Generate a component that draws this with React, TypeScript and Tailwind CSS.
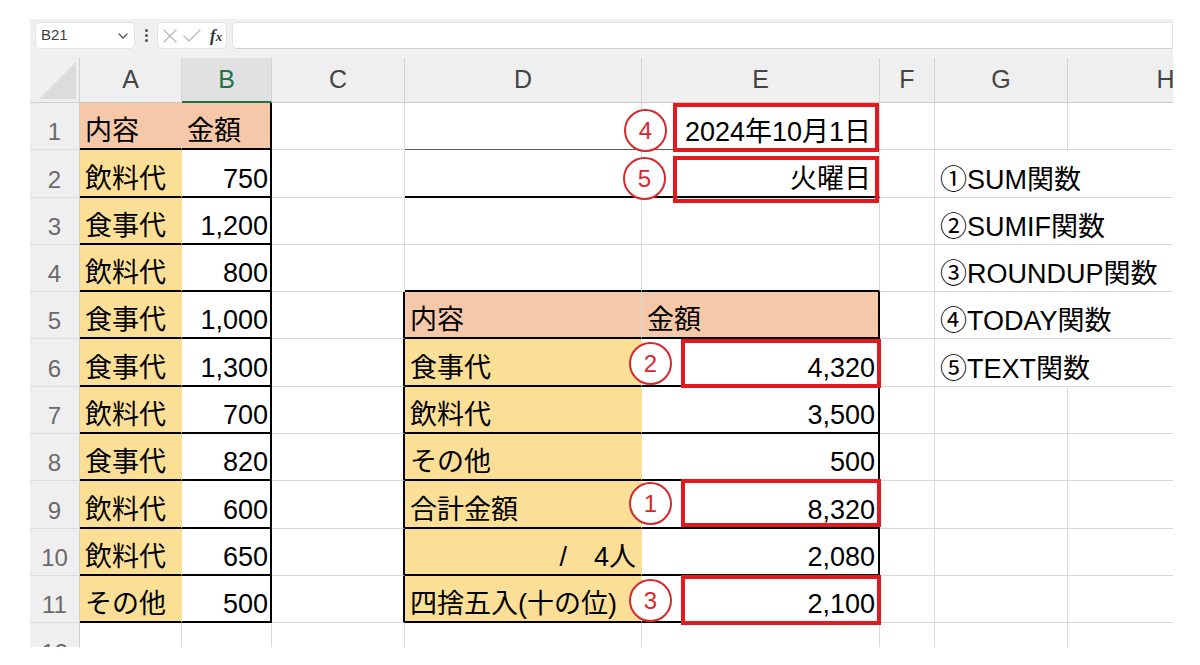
import { ChevronDown, X, Check } from "lucide-react";

type Cell = {
  t?: string;
  right?: boolean;
  bg?: string;
  b?: string;
  r?: string;
  pr?: string;
};

// border presets
const GB = "border-b border-b-[#d9d9d9]";
const BB = "border-b-2 border-b-black";
const BD = "border-b border-b-[#5a5a5a]";
const GR = "border-r border-r-[#d9d9d9]";
const RB = "border-r-2 border-r-black";
const RN = "border-r border-r-transparent";

const S = "bg-[#f5c8aa]";
const Y = "bg-[#fbdf97]";

const left = (t: string, bg: string): Cell => ({ t, bg, b: BB, r: RN });
const num = (t: string): Cell => ({ t, right: true, b: BB, r: RB, pr: "pr-[2px]" });
const amt = (t: string): Cell => ({ t, right: true, b: BB, r: RB, pr: "pr-[3px]" });
const tbl = (t: string): Cell => ({ t, bg: Y, b: BB, r: RN });
const fn = (t: string): Cell => ({ t, r: RN });

const rows: Cell[][] = [
  [left("内容", S), { t: "金額", bg: S, b: BB, r: RB }, {}, { b: BD }, { t: "2024年10月1日", right: true, b: BD, pr: "pr-[8px]" }, {}, {}, {}],
  [left("飲料代", Y), num("750"), {}, { b: BB }, { t: "火曜日", right: true, b: BB, pr: "pr-[8px]" }, {}, fn("①SUM関数"), {}],
  [left("食事代", Y), num("1,200"), {}, {}, {}, {}, fn("②SUMIF関数"), {}],
  [left("飲料代", Y), num("800"), {}, { b: BB }, { b: BB }, {}, fn("③ROUNDUP関数"), {}],
  [left("食事代", Y), num("1,000"), { r: RB }, { t: "内容", bg: S, b: BB }, { t: "金額", bg: S, b: BB, r: RB }, {}, fn("④TODAY関数"), {}],
  [left("食事代", Y), num("1,300"), { r: RB }, tbl("食事代"), amt("4,320"), {}, fn("⑤TEXT関数"), {}],
  [left("飲料代", Y), num("700"), { r: RB }, tbl("飲料代"), amt("3,500"), {}, {}, {}],
  [left("食事代", Y), num("820"), { r: RB }, tbl("その他"), amt("500"), {}, {}, {}],
  [left("飲料代", Y), num("600"), { r: RB }, tbl("合計金額"), amt("8,320"), {}, {}, {}],
  [left("飲料代", Y), num("650"), { r: RB }, { t: "/\u30004人", right: true, bg: Y, b: BB, r: RN, pr: "pr-[5px]" }, amt("2,080"), {}, {}, {}],
  [left("その他", Y), num("500"), { r: RB }, tbl("四捨五入(十の位)"), amt("2,100"), {}, {}, {}],
  [{}, {}, {}, {}, {}, {}, {}, {}],
];

const cols = ["A", "B", "C", "D", "E", "F", "G", "H"];

function FormulaBar() {
  return (
    <div className="flex h-[33px] items-center bg-[#f0f0f0] pl-[5px]">
      <div className="flex h-[27px] w-[100px] items-center justify-between rounded-[5px] border border-[#e4e4e4] bg-white pl-[5px] pr-[3px]">
        <span className="text-[15px] text-[#404040]">B21</span>
        <ChevronDown size={16} className="text-[#555]" strokeWidth={2} />
      </div>
      <div className="flex w-[22px] flex-col items-center gap-[2px]">
        <div className="h-[3px] w-[3px] rounded-full bg-[#555]" />
        <div className="h-[3px] w-[3px] rounded-full bg-[#555]" />
        <div className="h-[3px] w-[3px] rounded-full bg-[#555]" />
      </div>
      <div className="flex h-[27px] w-[70px] items-center overflow-hidden rounded-[5px] border border-[#e4e4e4] bg-white">
        <X size={24} className="shrink-0 text-[#b8b8b8]" strokeWidth={1.3} />
        <Check size={24} className="-ml-[2px] shrink-0 text-[#b8b8b8]" strokeWidth={1.3} />
        <span className="ml-[6px] font-['Liberation_Serif',serif] text-[17px] font-bold italic leading-none text-[#333]">
          f<span className="text-[13px]">x</span>
        </span>
      </div>
      <div className="ml-[5px] h-[27px] flex-1 rounded-l-[5px] border border-[#e4e4e4] border-b-[#cfcfcf] bg-white" />
    </div>
  );
}

function Circle({ n, pos }: { n: string; pos: string }) {
  return (
    <div
      className={`absolute flex h-[43px] w-[43px] items-center justify-center rounded-full border-2 border-[#d8282c] bg-white text-[24px] leading-none text-[#d8282c] ${pos}`}
    >
      {n}
    </div>
  );
}

export default function App() {
  return (
    <div className="relative h-[665px] w-[1200px] overflow-hidden bg-white font-['Liberation_Sans','Noto_Sans_CJK_JP',sans-serif]">
      <div className="ml-[30px] mt-[19px] w-[1143px] overflow-hidden">
        <FormulaBar />
        <div className="h-[6px] bg-[#f0f0f0]" />
        <div className="grid h-[589px] w-[1234px] grid-cols-[50px_102px_90px_133px_237px_238px_55px_133px_196px] grid-rows-[45px_repeat(12,47.3px)] overflow-hidden">
          {/* corner */}
          <div className="flex items-end justify-end border-b border-r border-[#d0d0d0] bg-[#efefef] pb-[3px] pr-[3px]">
            <svg width="37" height="37" viewBox="0 0 37 37">
              <polygon points="37,0 37,37 0,37" fill="#dcdcdc" />
            </svg>
          </div>
          {cols.map((c) =>
            c === "B" ? (
              <div
                key={c}
                className="flex items-center justify-center border-b-2 border-r border-b-[#217346] border-r-[#d4d4d4] bg-[#e1e1e1] text-[25px] text-[#217346]"
              >
                {c}
              </div>
            ) : (
              <div
                key={c}
                className="flex items-center justify-center border-b border-r border-b-[#c8c8c8] border-r-[#d4d4d4] bg-[#efefef] text-[25px] text-[#444]"
              >
                {c}
              </div>
            )
          )}
          {rows.map((row, i) => (
            <div key={i} className="contents">
              <div className="flex items-end justify-center border-b border-r border-b-[#dcdcdc] border-r-[#d0d0d0] bg-[#efefef] pb-[5px] text-[24px] leading-none text-[#6a6a6a]">
                {i + 1}
              </div>
              {row.map((c, j) => (
                <div
                  key={j}
                  className={`flex items-end whitespace-nowrap pb-[3px] text-[27px] leading-none text-black ${c.bg ?? ""} ${c.b ?? GB} ${c.r ?? GR} ${
                    c.right ? `justify-end ${c.pr ?? "pr-[3px]"}` : "pl-[5px]"
                  }`}
                >
                  {c.t}
                </div>
              ))}
            </div>
          ))}
        </div>
      </div>

      {/* red highlight boxes */}
      <div className="absolute left-[673px] top-[103px] h-[49px] w-[206px] border-[4px] border-[#e3191f]" />
      <div className="absolute left-[673px] top-[156px] h-[47px] w-[206px] border-[4px] border-[#e3191f]" />
      <div className="absolute left-[681px] top-[339px] h-[49px] w-[200px] border-[4px] border-[#e3191f]" />
      <div className="absolute left-[681px] top-[479px] h-[48px] w-[200px] border-[4px] border-[#e3191f]" />
      <div className="absolute left-[681px] top-[575px] h-[50px] w-[200px] border-[4px] border-[#e3191f]" />

      <Circle n="4" pos="left-[624px] top-[109px]" />
      <Circle n="5" pos="left-[623px] top-[157px]" />
      <Circle n="2" pos="left-[629px] top-[342px]" />
      <Circle n="1" pos="left-[629px] top-[482px]" />
      <Circle n="3" pos="left-[629px] top-[579px]" />
    </div>
  );
}
